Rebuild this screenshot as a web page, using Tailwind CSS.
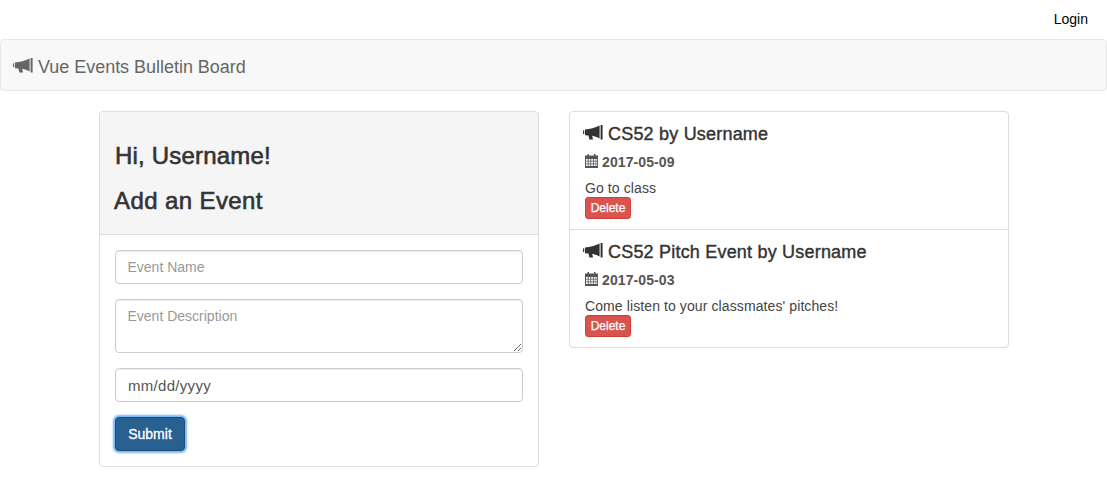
<!DOCTYPE html>
<html lang="en">
<head>
    <meta charset="UTF-8">
    <meta name="viewport" content="width=device-width, initial-scale=1.0">
    <title>Vue Events Bulletin Board</title>
    <script src="https://cdn.jsdelivr.net/npm/@tailwindcss/browser@4"></script>
</head>
<body class="bg-white text-[#333] text-[14px] leading-[20px] font-['Liberation_Sans',Arial,sans-serif]">
    <svg class="hidden">
        <symbol id="bullhorn" viewBox="0 0 20 15">
            <path fill="currentColor" d="M0 5.6 L1.2 5.2 L1.2 9.2 L0 8.8 Z M2 4.4 C7 4.4 12 3 16.6 0.6 L16.6 13.4 C14 12 11.5 11.2 9.2 10.7 L10 14.6 L6.4 14.6 L5.4 10.4 L2 10.2 Z M17.6 0 L19.6 0 L19.6 14.6 L17.6 14.6 Z"/>
        </symbol>
        <symbol id="calendar" viewBox="0 0 13 14">
            <path fill="currentColor" fill-rule="evenodd" d="M2.5 0 H4 V1.5 H9 V0 H10.5 V1.5 H13 V14 H0 V1.5 H2.5 Z M1 5 V6.8 H2.8 V5 Z M3.6 5 V6.8 H5.4 V5 Z M6.2 5 V6.8 H8 V5 Z M8.8 5 V6.8 H10.6 V5 Z M11.2 5 V6.8 H12.2 V5 Z M1 7.6 V9.4 H2.8 V7.6 Z M3.6 7.6 V9.4 H5.4 V7.6 Z M6.2 7.6 V9.4 H8 V7.6 Z M8.8 7.6 V9.4 H10.6 V7.6 Z M11.2 7.6 V9.4 H12.2 V7.6 Z M1 10.2 V12 H2.8 V10.2 Z M3.6 10.2 V12 H5.4 V10.2 Z M6.2 10.2 V12 H8 V10.2 Z M8.8 10.2 V12 H10.6 V10.2 Z M11.2 10.2 V12 H12.2 V10.2 Z"/>
        </symbol>
    </svg>

    <div class="flex justify-end h-[39px] pt-[9px] pr-[19px]">
        <a href="#" class="text-black">Login</a>
    </div>

    <nav class="h-[52px] bg-[#f8f8f8] border border-[#e7e7e7] rounded-[4px] flex items-center pl-[12px] text-[18px] text-[#777]">
        <a href="#" class="flex items-center text-[#666] mt-[3px] tracking-[-0.03px]">
            <svg class="w-[20px] h-[15px] mr-[5px] mt-[-3px]"><use href="#bullhorn"/></svg>
            Vue Events Bulletin Board
        </a>
    </nav>

    <main class="flex gap-[30px] pl-[99px] mt-[20px] items-start">
        <section class="w-[440px] h-[356px] border border-[#ddd] rounded-[4px] overflow-hidden">
            <div class="h-[123px] bg-[#f5f5f5] border-b border-[#ddd] pl-[14px] pt-[28px]">
                <h2 class="text-[24px] leading-[32px] font-medium tracking-[0.2px] ml-[1px] [-webkit-text-stroke:0.6px_#333]">Hi, Username!</h2>
                <h2 class="text-[24px] leading-[32px] font-medium mt-[13px] tracking-[0.4px] [-webkit-text-stroke:0.6px_#333]">Add an Event</h2>
            </div>
            <form class="px-[15px] pt-[15px] flex flex-col">
                <input type="text" placeholder="Event Name" class="h-[34px] px-[11.5px] border border-[#ccc] rounded-[4px] shadow-[inset_0_1px_1px_rgba(0,0,0,0.075)] placeholder:text-[#999]">
                <textarea placeholder="Event Description" class="h-[54px] mt-[15px] px-[11.5px] py-[6px] border border-[#ccc] rounded-[4px] shadow-[inset_0_1px_1px_rgba(0,0,0,0.075)] placeholder:text-[#999]"></textarea>
                <input type="text" value="mm/dd/yyyy" class="h-[34px] mt-[15px] px-[12px] border border-[#ccc] rounded-[4px] text-[15px] text-[#555] tracking-[0.3px] shadow-[inset_0_1px_1px_rgba(0,0,0,0.075)]">
                <button type="button" class="self-start w-[70px] h-[34px] mt-[15px] bg-[#286090] border border-[#204d74] rounded-[4px] text-white [-webkit-text-stroke:0.3px_#fff] shadow-[0_0_2px_2px_#76b6f5]">Submit</button>
            </form>
        </section>

        <section class="w-[440px] border border-[#ddd] rounded-[4px]">
            <article class="h-[118px] px-[15px] pt-[10px] border-b border-[#ddd]">
                <h4 class="flex items-center text-[18px] leading-[24px] font-medium tracking-[0.2px] [-webkit-text-stroke:0.4px_#333]">
                    <svg class="w-[20px] h-[15px] mr-[5px] ml-[-2px] mt-[-3px]"><use href="#bullhorn"/></svg>
                    CS52 by Username
                </h4>
                <h5 class="flex items-center mt-[6px] font-bold text-[#555] leading-[20px] tracking-[0.1px]">
                    <svg class="w-[13px] h-[14px] mr-[4px] mt-[-2px]"><use href="#calendar"/></svg>
                    2017-05-09
                </h5>
                <p class="mt-[6px] text-[#444] tracking-[0.1px]">Go to class</p>
                <button type="button" class="block w-[46px] h-[22px] mt-[-1px] bg-[#d9534f] border border-[#d43f3a] rounded-[3px] text-white text-[12px] leading-[18px] [-webkit-text-stroke:0.25px_#fff]">Delete</button>
            </article>
            <article class="h-[117px] px-[15px] pt-[10px]">
                <h4 class="flex items-center text-[18px] leading-[24px] font-medium tracking-[0.2px] [-webkit-text-stroke:0.4px_#333]">
                    <svg class="w-[20px] h-[15px] mr-[5px] ml-[-2px] mt-[-3px]"><use href="#bullhorn"/></svg>
                    CS52 Pitch Event by Username
                </h4>
                <h5 class="flex items-center mt-[6px] font-bold text-[#555] leading-[20px] tracking-[0.1px]">
                    <svg class="w-[13px] h-[14px] mr-[4px] mt-[-2px]"><use href="#calendar"/></svg>
                    2017-05-03
                </h5>
                <p class="mt-[6px] text-[#444] tracking-[0.1px]">Come listen to your classmates' pitches!</p>
                <button type="button" class="block w-[46px] h-[22px] mt-[-1px] bg-[#d9534f] border border-[#d43f3a] rounded-[3px] text-white text-[12px] leading-[18px] [-webkit-text-stroke:0.25px_#fff]">Delete</button>
            </article>
        </section>
    </main>
</body>
</html>
